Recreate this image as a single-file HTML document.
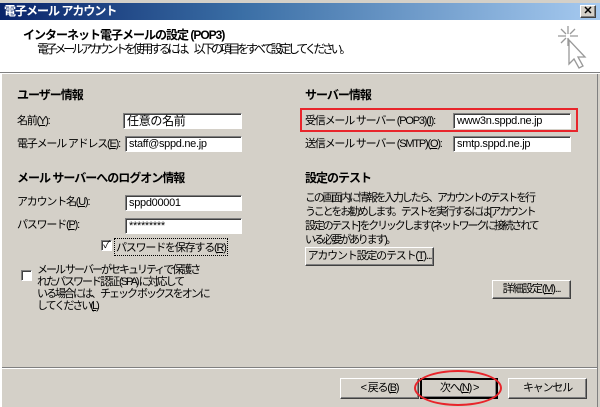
<!DOCTYPE html>
<html><head><meta charset="utf-8"><style>
body{margin:0;width:600px;height:407px;overflow:hidden;background:#d4d0c8;font-family:"Liberation Sans","Noto Sans CJK JP",sans-serif;font-size:11px;color:#000;position:relative;letter-spacing:-1.2px}
.a{position:absolute;white-space:nowrap}
.b{font-weight:bold;font-size:12px;letter-spacing:-1px}
.in{position:absolute;background:#fff;border-top:1px solid #808080;border-left:1px solid #808080;border-right:1px solid #fff;border-bottom:1px solid #fff;box-shadow:inset 1px 1px 0 #404040;font-size:11px;line-height:14px;padding-left:3px;box-sizing:border-box;height:16px;letter-spacing:-0.3px}
.btn{position:absolute;background:#d4d0c8;border:1px solid;border-color:#fff #404040 #404040 #fff;box-shadow:inset -1px -1px 0 #808080;box-sizing:border-box;text-align:center;font-size:11px;white-space:nowrap}
</style></head><body>
<div class="a" style="left:0;top:0;width:600px;height:3px;background:#d4d0c8"></div>
<div class="a" style="left:0;top:3px;width:600px;height:17px;background:linear-gradient(90deg,#0a246a,#3a6ea5 40%,#a6caf0)"></div>
<div class="a" style="left:4px;top:4px;color:#fff;font-weight:bold;font-size:12px;line-height:15px;letter-spacing:-1px">電子メール アカウント</div>
<div class="btn" style="left:580px;top:5px;width:16px;height:13px;line-height:10px;font-weight:bold;font-size:11px;letter-spacing:0">✕</div>
<div class="a" style="left:0;top:20px;width:600px;height:52px;background:#fff"></div>
<div class="a" style="left:0;top:72px;width:600px;height:1px;background:#808080"></div>
<div class="a" style="left:0;top:73px;width:600px;height:1px;background:#fff"></div>
<div class="a" style="left:23px;top:26px;font-weight:bold;font-size:12px;letter-spacing:-1px">インターネット電子メールの設定 (POP3)</div>
<div class="a" style="left:37px;top:40px;font-size:12px;letter-spacing:-3.3px">電子メール アカウントを使用するには、以下の項目をすべて設定してください。</div>
<svg class="a" style="left:555px;top:24px" width="40" height="48" viewBox="0 0 40 48"><g stroke="#999" stroke-width="1.3" fill="none"><path d="M13 2v8M13 14v8M3 12h8M15 12h8M6 5l5 5M20 5l-5 5M6 19l5-5"/><path d="M14 16v24l5-5 5 9 4-2-5-9h7z" fill="#fff"/></g></svg>
<div class="a" style="left:0;top:74px;width:2px;height:333px;background:#fff"></div>
<div class="a" style="left:597px;top:74px;width:1px;height:333px;background:#808080"></div>

<div class="a b" style="left:17px;top:86px">ユーザー情報</div>
<div class="a" style="left:17px;top:112px">名前(<u>Y</u>):</div>
<div class="in" style="left:123px;top:113px;width:119px;font-size:12px">任意の名前</div>
<div class="a" style="left:17px;top:135px">電子メール アドレス(<u>E</u>):</div>
<div class="in" style="left:125px;top:136px;width:117px">staff@sppd.ne.jp</div>
<div class="a b" style="left:17px;top:169px">メール サーバーへのログオン情報</div>
<div class="a" style="left:17px;top:193px">アカウント名(<u>U</u>):</div>
<div class="in" style="left:125px;top:195px;width:117px">sppd00001</div>
<div class="a" style="left:17px;top:216px">パスワード(<u>P</u>):</div>
<div class="in" style="left:125px;top:218px;width:117px">*********</div>
<div class="in" style="left:101px;top:240px;width:11px;height:11px;padding:0;line-height:9px;font-size:10px;text-align:center">✓</div>
<div class="a" style="left:114px;top:238px;border:1px dotted #000;padding:0 1px">パスワードを保存する(<u>R</u>)</div>
<div class="in" style="left:21px;top:270px;width:11px;height:11px;padding:0"></div>
<div class="a" style="left:37px;top:264px;line-height:12px;letter-spacing:-2px">メール サーバーがセキュリティで保護さ<br>れたパスワード認証 (SPA) に対応して<br>いる場合には、チェック ボックスをオンに<br>してください(<u>L</u>)</div>

<div class="a b" style="left:305px;top:86px">サーバー情報</div>
<div class="a" style="left:300px;top:108px;width:274px;height:20px;border:2px solid #e8252b"></div>
<div class="a" style="left:305px;top:112px">受信メール サーバー (POP3)(<u>I</u>):</div>
<div class="in" style="left:453px;top:113px;width:118px">www3n.sppd.ne.jp</div>
<div class="a" style="left:305px;top:135px">送信メール サーバー (SMTP)(<u>O</u>):</div>
<div class="in" style="left:453px;top:136px;width:118px">smtp.sppd.ne.jp</div>
<div class="a b" style="left:305px;top:169px">設定のテスト</div>
<div class="a" style="left:305px;top:191px;line-height:14px;letter-spacing:-2.2px">この画面内に情報を入力したら、アカウントのテストを行<br>うことをお勧めします。テストを実行するには [アカウント<br>設定のテスト] をクリックします (ネットワークに接続されて<br>いる必要があります)。</div>
<div class="btn" style="left:305px;top:247px;width:129px;height:19px;line-height:17px">アカウント設定のテスト(<u>T</u>)...</div>
<div class="btn" style="left:492px;top:280px;width:79px;height:19px;line-height:17px">詳細設定(<u>M</u>)...</div>

<div class="a" style="left:2px;top:367px;width:595px;height:1px;background:#808080"></div>
<div class="a" style="left:2px;top:368px;width:595px;height:1px;background:#fff"></div>
<div class="btn" style="left:340px;top:378px;width:79px;height:21px;line-height:19px">&lt; 戻る(<u>B</u>)</div>
<div class="btn" style="left:420px;top:378px;width:78px;height:21px;line-height:17px;border:2px solid #000">次へ(<u>N</u>) &gt;</div>
<div class="btn" style="left:508px;top:378px;width:79px;height:21px;line-height:19px">キャンセル</div>
<div class="a" style="left:414px;top:370px;width:88px;height:36px;border:2px solid #e8252b;border-radius:50%;box-sizing:border-box"></div>
</body></html>
